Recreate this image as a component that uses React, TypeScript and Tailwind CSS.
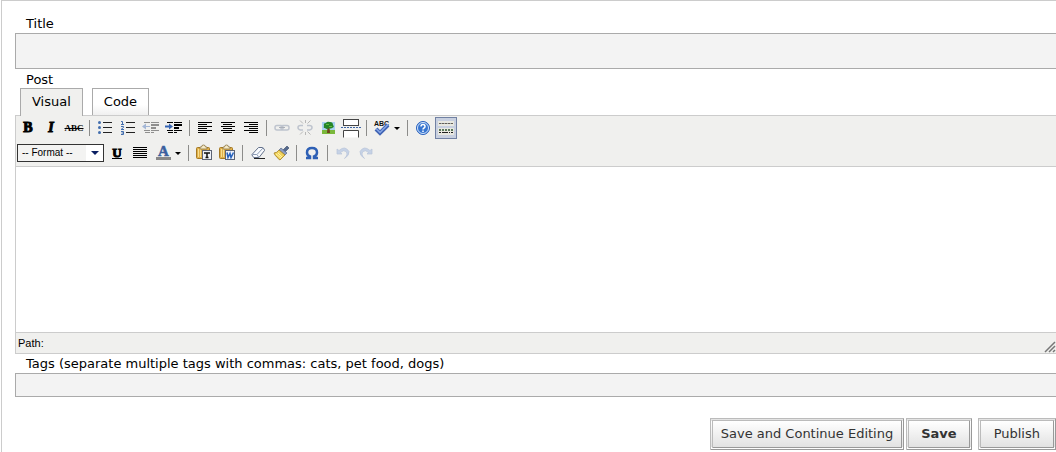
import React, { useState } from "react";

type IconProps = { children: React.ReactNode; crisp?: boolean };

function Icon({ children, crisp = false }: IconProps) {
  return (
    <svg
      viewBox="0 0 20 20"
      className="h-5 w-5 shrink-0"
      shapeRendering={crisp ? "crispEdges" : "auto"}
      aria-hidden="true"
    >
      {children}
    </svg>
  );
}

function ToolButton({
  label,
  disabled = false,
  active = false,
  children,
}: {
  label: string;
  disabled?: boolean;
  active?: boolean;
  children: React.ReactNode;
}) {
  return (
    <button
      type="button"
      title={label}
      aria-label={label}
      aria-pressed={active || undefined}
      disabled={disabled}
      className={`flex h-[22px] w-[22px] shrink-0 items-center justify-center border ${
        active
          ? "border-[#7181a3] bg-[#c8d0e0]"
          : "border-transparent hover:border-[#0a246a] hover:bg-[#b2bbd0]"
      } ${disabled ? "opacity-40" : ""}`}
    >
      {children}
    </button>
  );
}

function SplitButton({
  label,
  children,
}: {
  label: string;
  children: React.ReactNode;
}) {
  return (
    <button
      type="button"
      title={label}
      aria-label={label}
      className="flex h-[22px] w-8 shrink-0 items-center border border-transparent hover:border-[#0a246a]"
    >
      {children}
      <svg viewBox="0 0 10 20" className="h-5 w-[10px]" aria-hidden="true">
        <path d="M2 9h6l-3 3z" fill="#000" />
      </svg>
    </button>
  );
}

function Separator() {
  return <span className="mx-[3px] h-4 w-px shrink-0 bg-[#8c8c8a]" />;
}

function Lines({ rows, color = "#000" }: { rows: number[][]; color?: string }) {
  return (
    <>
      {rows.map(([x, y, w]) => (
        <rect key={`${x}-${y}`} x={x} y={y} width={w} height="1" fill={color} />
      ))}
    </>
  );
}

const alignLeft = [[3, 4, 14], [3, 6, 9], [3, 8, 14], [3, 10, 9], [3, 12, 14], [3, 14, 9]];
const alignCenter = [[3, 4, 14], [5, 6, 9], [3, 8, 14], [5, 10, 9], [3, 12, 14], [5, 14, 9]];
const alignRight = [[3, 4, 14], [8, 6, 9], [3, 8, 14], [8, 10, 9], [3, 12, 14], [8, 14, 9]];
const alignFull = [[3, 4, 14], [3, 6, 14], [3, 8, 14], [3, 10, 14], [3, 12, 14], [3, 14, 14]];
const indentLines = [[3, 4, 6], [10, 4, 8], [10, 6, 8], [10, 7, 8], [10, 9, 5], [10, 10, 5], [3, 12, 6], [10, 12, 8], [4, 14, 5], [10, 14, 3]];

function Clipboard() {
  return (
    <>
      <rect x="2.500" y="4.500" width="13" height="11" rx="1" fill="#e0b04a" stroke="#a67a24" />
      <path d="M4.500 6v8M6.500 6v8" stroke="#f8df91" />
      <path d="M6 6V4h1.500q0-2 2-2t2 2H13v2z" fill="#f5eac6" stroke="#8b7441" strokeWidth=".8" />
      <rect x="8.500" y="7.500" width="9" height="9" fill="#eef2fa" stroke="#5d6475" />
    </>
  );
}

function RowOne() {
  return (
    <div className="flex items-center gap-px">
      <ToolButton label="Bold">
        <span className="font-['Liberation_Serif',serif] text-[14px] leading-5 font-bold [-webkit-text-stroke:1px_#000]">B</span>
      </ToolButton>
      <ToolButton label="Italic">
        <span className="font-['Liberation_Serif',serif] text-[14px] leading-5 font-bold italic [-webkit-text-stroke:1px_#000]">I</span>
      </ToolButton>
      <ToolButton label="Strikethrough">
        <span className="font-['Liberation_Serif',serif] text-[9px] leading-5 font-bold line-through">ABC</span>
      </ToolButton>
      <Separator />
      <ToolButton label="Unordered list">
        <Icon>
          <g fill="#426eae">
            <circle cx="4.500" cy="4.500" r="1.500" />
            <circle cx="4.500" cy="9.500" r="1.500" />
            <circle cx="4.500" cy="14.500" r="1.500" />
          </g>
          <path d="M8 4.500h9M8 9.500h9M8 14.500h9" stroke="#222" />
        </Icon>
      </ToolButton>
      <ToolButton label="Ordered list">
        <Icon>
          <path
            d="M3 3.500h1.500v3M3 6.500h3M3 8.500h2.500v1L3 11.500h3M3 13.500h2.500v3H3M3.500 15h2"
            fill="none"
            stroke="#426eae"
          />
          <path d="M8 4.500h9M8 9.500h9M8 14.500h9" stroke="#222" />
        </Icon>
      </ToolButton>
      <ToolButton label="Outdent" disabled>
        <Icon>
          <g shapeRendering="crispEdges">
            <Lines rows={indentLines} />
          </g>
          <path d="M9 8H5V5.500l-4 3 4 3V9h4z" fill="#3564b4" />
        </Icon>
      </ToolButton>
      <ToolButton label="Indent">
        <Icon>
          <g shapeRendering="crispEdges">
            <Lines rows={indentLines} />
          </g>
          <path d="M1 7.500h4V5.500l4 3-4 3v-2H1z" fill="#3564b4" />
        </Icon>
      </ToolButton>
      <Separator />
      <ToolButton label="Align left">
        <Icon crisp><Lines rows={alignLeft} /></Icon>
      </ToolButton>
      <ToolButton label="Align center">
        <Icon crisp><Lines rows={alignCenter} /></Icon>
      </ToolButton>
      <ToolButton label="Align right">
        <Icon crisp><Lines rows={alignRight} /></Icon>
      </ToolButton>
      <Separator />
      <ToolButton label="Insert link" disabled>
        <Icon>
          <g fill="none" stroke="#7684a0" strokeWidth="1.500">
            <rect x="3" y="7.500" width="8" height="4.500" rx="2" />
            <rect x="9" y="7.500" width="8" height="4.500" rx="2" />
          </g>
          <path d="M7 9.500h6" stroke="#444f68" />
        </Icon>
      </ToolButton>
      <ToolButton label="Unlink" disabled>
        <Icon>
          <g fill="none" stroke="#7684a0" strokeWidth="1.500">
            <path d="M8 7.500H5.500q-2.500 0-2.500 2T5.500 12H8M12 7.500h2.500q2.500 0 2.500 2t-2.500 2.500H12" />
            <path d="M8 5.500L5 2.500M10.500 5V2M12.500 5.500l3-3M8 13.500l-3 3M10.500 14v3M12.500 13.500l3 3" stroke="#666" strokeWidth="1" />
          </g>
        </Icon>
      </ToolButton>
      <ToolButton label="Insert image">
        <Icon>
          <rect x="4" y="4" width="13" height="12" fill="#a9d0f3" />
          <path d="M4 12h13v4H4z" fill="#7ab83b" />
          <path d="M9.500 9h2l.5 6h-3z" fill="#70441c" />
          <path d="M6 8q-1-3 2-3 1-2 4-1 3 0 3 3 2 2-1 3-2 1-3 0-2 2-4 0-2 0-1-2z" fill="#258427" />
          <path d="M8 6h3v1H8zM11 8h3v1h-3z" fill="#62bb3b" />
        </Icon>
      </ToolButton>
      <ToolButton label="Insert more tag">
        <Icon>
          <rect x="2.500" y="1.500" width="15" height="6" fill="#fff" stroke="#444" />
          <path d="M2.500 19.500v-7h15v7" fill="#fff" stroke="#444" />
          <path d="M0 9.500h20" stroke="#3e65a4" strokeDasharray="2 1" />
        </Icon>
      </ToolButton>
      <Separator />
      <SplitButton label="Spellcheck">
        <Icon>
          <text x="2" y="8" fontSize="7" fontWeight="bold" fontFamily="Liberation Sans, sans-serif" fill="#111">ABC</text>
          <path d="M4 11l4 4 8-8" fill="none" stroke="#3f63b4" strokeWidth="4" />
          <path d="M4 10.500l4 4L16 6.500" fill="none" stroke="#86a6e6" strokeWidth="1.500" />
        </Icon>
      </SplitButton>
      <Separator />
      <ToolButton label="Help">
        <Icon>
          <circle cx="10" cy="10" r="6.500" fill="#3775d0" stroke="#2b62bd" />
          <circle cx="10" cy="10" r="5.500" fill="none" stroke="#d4e5fc" />
          <path d="M8 8.500Q8 6.500 10 6.500t2 2q0 1-1 1.500-1 .5-1 1.500M10 12.500V14" fill="none" stroke="#fff" strokeWidth="1.500" />
        </Icon>
      </ToolButton>
      <ToolButton label="Show/Hide advanced toolbar" active>
        <Icon crisp>
          <path d="M2 3h16v5H2zM2 10h16v7H2z" fill="#e8e8e0" />
          <path d="M3 5h14v1H3z" fill="#9aa" />
          <path d="M3 5.500h14" stroke="#665f58" strokeWidth="1" strokeDasharray="2 1" />
          <path d="M3 12h14" stroke="#5d7a5d" strokeWidth="2" strokeDasharray="2 1" />
          <path d="M3 14.500h2M6 14.500h6M13 14.500h1M15 14.500h2" stroke="#222" strokeWidth="1" />
        </Icon>
      </ToolButton>
    </div>
  );
}

function RowTwo() {
  return (
    <div className="flex items-center gap-px">
      <div className="relative mr-px h-[18px] w-[87px] shrink-0">
        <select
          aria-label="Format"
          className="block h-full w-full appearance-none border border-[#333] bg-[linear-gradient(to_right,#f3f3f2_68px,#fff_68px)] pl-1 font-['Liberation_Sans',sans-serif] text-[10px] leading-4 text-black"
        >
          <option>-- Format --</option>
          <option>Paragraph</option>
          <option>Heading 1</option>
          <option>Heading 2</option>
        </select>
        <svg viewBox="0 0 8 4" className="pointer-events-none absolute top-[7px] right-[5px] h-1 w-2" aria-hidden="true">
          <path d="M0 0h8L4 4z" fill="#0a1f62" />
        </svg>
      </div>
      <ToolButton label="Underline">
        <span className="border-b border-black font-['Liberation_Serif',serif] text-[13px] leading-[10px] font-bold [-webkit-text-stroke:1px_#000]">U</span>
      </ToolButton>
      <ToolButton label="Align full">
        <Icon crisp><Lines rows={alignFull} /></Icon>
      </ToolButton>
      <SplitButton label="Select text color">
        <Icon>
          <text x="5" y="13" fontSize="15" fontWeight="bold" fontFamily="Liberation Serif, serif" fill="#3a5f9e" stroke="#3a5f9e" strokeWidth=".5">A</text>
          <path d="M3 14h15v3H3z" fill="#888" />
        </Icon>
      </SplitButton>
      <Separator />
      <ToolButton label="Paste as plain text">
        <Icon>
          <Clipboard />
          <path d="M10 10h6M13 10v5M11.500 14.500h3" stroke="#111" strokeWidth="1.500" />
        </Icon>
      </ToolButton>
      <ToolButton label="Paste from Word">
        <Icon>
          <Clipboard />
          <path d="M10 9.500l1 5 2-4 1 4L16.500 9.500" fill="none" stroke="#2863bd" strokeWidth="1.500" />
        </Icon>
      </ToolButton>
      <Separator />
      <ToolButton label="Remove formatting">
        <Icon>
          <path d="M10.500 4.500h4q2 1 2 3l-5.500 7H6q-2-1-2-3z" fill="#f9fbfe" stroke="#62708a" />
          <path d="M4.500 11.500h4q2 1 2 3M9 11.500l6-6.500" fill="none" stroke="#8b9bb5" />
          <path d="M6 15.500h11" stroke="#222" />
        </Icon>
      </ToolButton>
      <ToolButton label="Cleanup messy code">
        <Icon>
          <path d="M16 3l2 2-4 4-2-2z" fill="#54698e" stroke="#384967" strokeWidth=".6" />
          <path d="M10 5l6 5-2 2-6-5z" fill="#8c9dc2" stroke="#566889" strokeWidth=".7" />
          <path d="M8 7l6 5-5 5q-2-1-3-3-2-1-3-4 3 0 5-3z" fill="#f1d35d" stroke="#a27e22" strokeWidth=".8" />
          <path d="M5 11l5 4M7 10l4 4" stroke="#fff2a4" />
        </Icon>
      </ToolButton>
      <Separator />
      <ToolButton label="Insert custom character">
        <Icon>
          <path
            d="M4 15h4v-1.500Q5 12.500 5 9.500q0-4.500 5-4.500t5 4.500q0 3-3 4V15h4"
            fill="none"
            stroke="#2e60b5"
            strokeWidth="2.500"
          />
        </Icon>
      </ToolButton>
      <Separator />
      <ToolButton label="Undo" disabled>
        <Icon>
          <path d="M4 6v5h5L7.500 9.500q3-3 5.500-1 2.500 3-1.500 7 5-3 4.500-7Q12 2 6 7.500z" fill="#88a7dc" stroke="#6584ba" strokeWidth=".7" />
        </Icon>
      </ToolButton>
      <ToolButton label="Redo" disabled>
        <Icon>
          <path d="M16 6v5h-5l1.500-1.500q-3-3-5.500-1-2.500 3 1.500 7-5-3-4.500-7Q8 2 14 7.500z" fill="#88a7dc" stroke="#6584ba" strokeWidth=".7" />
        </Icon>
      </ToolButton>
    </div>
  );
}

function ActionButton({
  children,
  className = "",
}: {
  children: React.ReactNode;
  className?: string;
}) {
  return (
    <button
      type="button"
      className={`h-8 border-3 border-double border-t-[#bbb] border-r-[#999] border-b-[#999] border-l-[#bbb] bg-linear-to-b from-white to-[#e2e2e2] leading-5 whitespace-nowrap text-[#333] ${className}`}
    >
      {children}
    </button>
  );
}

export default function App() {
  const [tab, setTab] = useState<"visual" | "code">("visual");
  const [body, setBody] = useState("");

  // the open tab covers the toolbar's top border
  const tabStyle = (name: "visual" | "code") =>
    `border border-b-0 border-[#aaa] px-[11px] leading-5 ${
      tab === name
        ? "-mb-px h-7 bg-[#f0f0ee] pb-px"
        : "h-[27px] bg-linear-to-b from-white from-60% to-[#f0f0f0]"
    }`;

  return (
    <form className="ml-px min-h-screen border-t border-l border-[#ccc] bg-white pt-[14px] pl-[13px] font-['DejaVu_Sans',sans-serif] text-[13px] text-black">
      <label htmlFor="title" className="block pl-[11px] leading-[18px]">
        Title
      </label>
      <input
        id="title"
        type="text"
        className="block h-9 w-full border border-r-0 border-[#aaa] bg-[#f3f3f3] px-2 outline-none"
      />

      <label htmlFor="post" className="block pt-[3px] pl-[11px] leading-4">
        Post
      </label>
      <div className="flex items-end gap-[9px] pl-[5px]">
        <button type="button" className={tabStyle("visual")} onClick={() => setTab("visual")}>
          Visual
        </button>
        <button type="button" className={tabStyle("code")} onClick={() => setTab("code")}>
          Code
        </button>
      </div>

      <div className="border-y border-l border-[#ccc]">
        <div className="flex flex-col gap-[3px] border-b border-[#ccc] bg-[#f0f0ee] pt-px pb-[2px] pl-px">
          <RowOne />
          <RowTwo />
        </div>
        <textarea
          id="post"
          value={body}
          onChange={(e) => setBody(e.target.value)}
          className="block h-[165px] w-full resize-none bg-white p-2 outline-none"
        />
        <div className="flex h-[21px] items-center justify-between border-t border-[#ccc] bg-[#f0f0ee] pl-[2px] font-['Liberation_Sans',sans-serif] text-[11px] leading-4">
          <span>Path:</span>
          <svg viewBox="0 0 12 12" className="h-3 w-3 self-end" aria-hidden="true">
            <path d="M1 11L11 1M5 11L11 5M9 11l2-2" stroke="#777" strokeWidth="1.500" />
          </svg>
        </div>
      </div>

      <label htmlFor="tags" className="block pl-[11px] leading-[19px]">
        Tags (separate multiple tags with commas: cats, pet food, dogs)
      </label>
      <input
        id="tags"
        type="text"
        className="block h-6 w-full border border-r-0 border-[#aaa] bg-[#f3f3f3] px-2 outline-none"
      />

      <div className="flex justify-end pt-[21px]">
        <ActionButton className="px-2">Save and Continue Editing</ActionButton>
        <ActionButton className="ml-[2px] px-3 font-bold">Save</ActionButton>
        <ActionButton className="ml-[6px] px-[13px]">Publish</ActionButton>
      </div>
    </form>
  );
}
